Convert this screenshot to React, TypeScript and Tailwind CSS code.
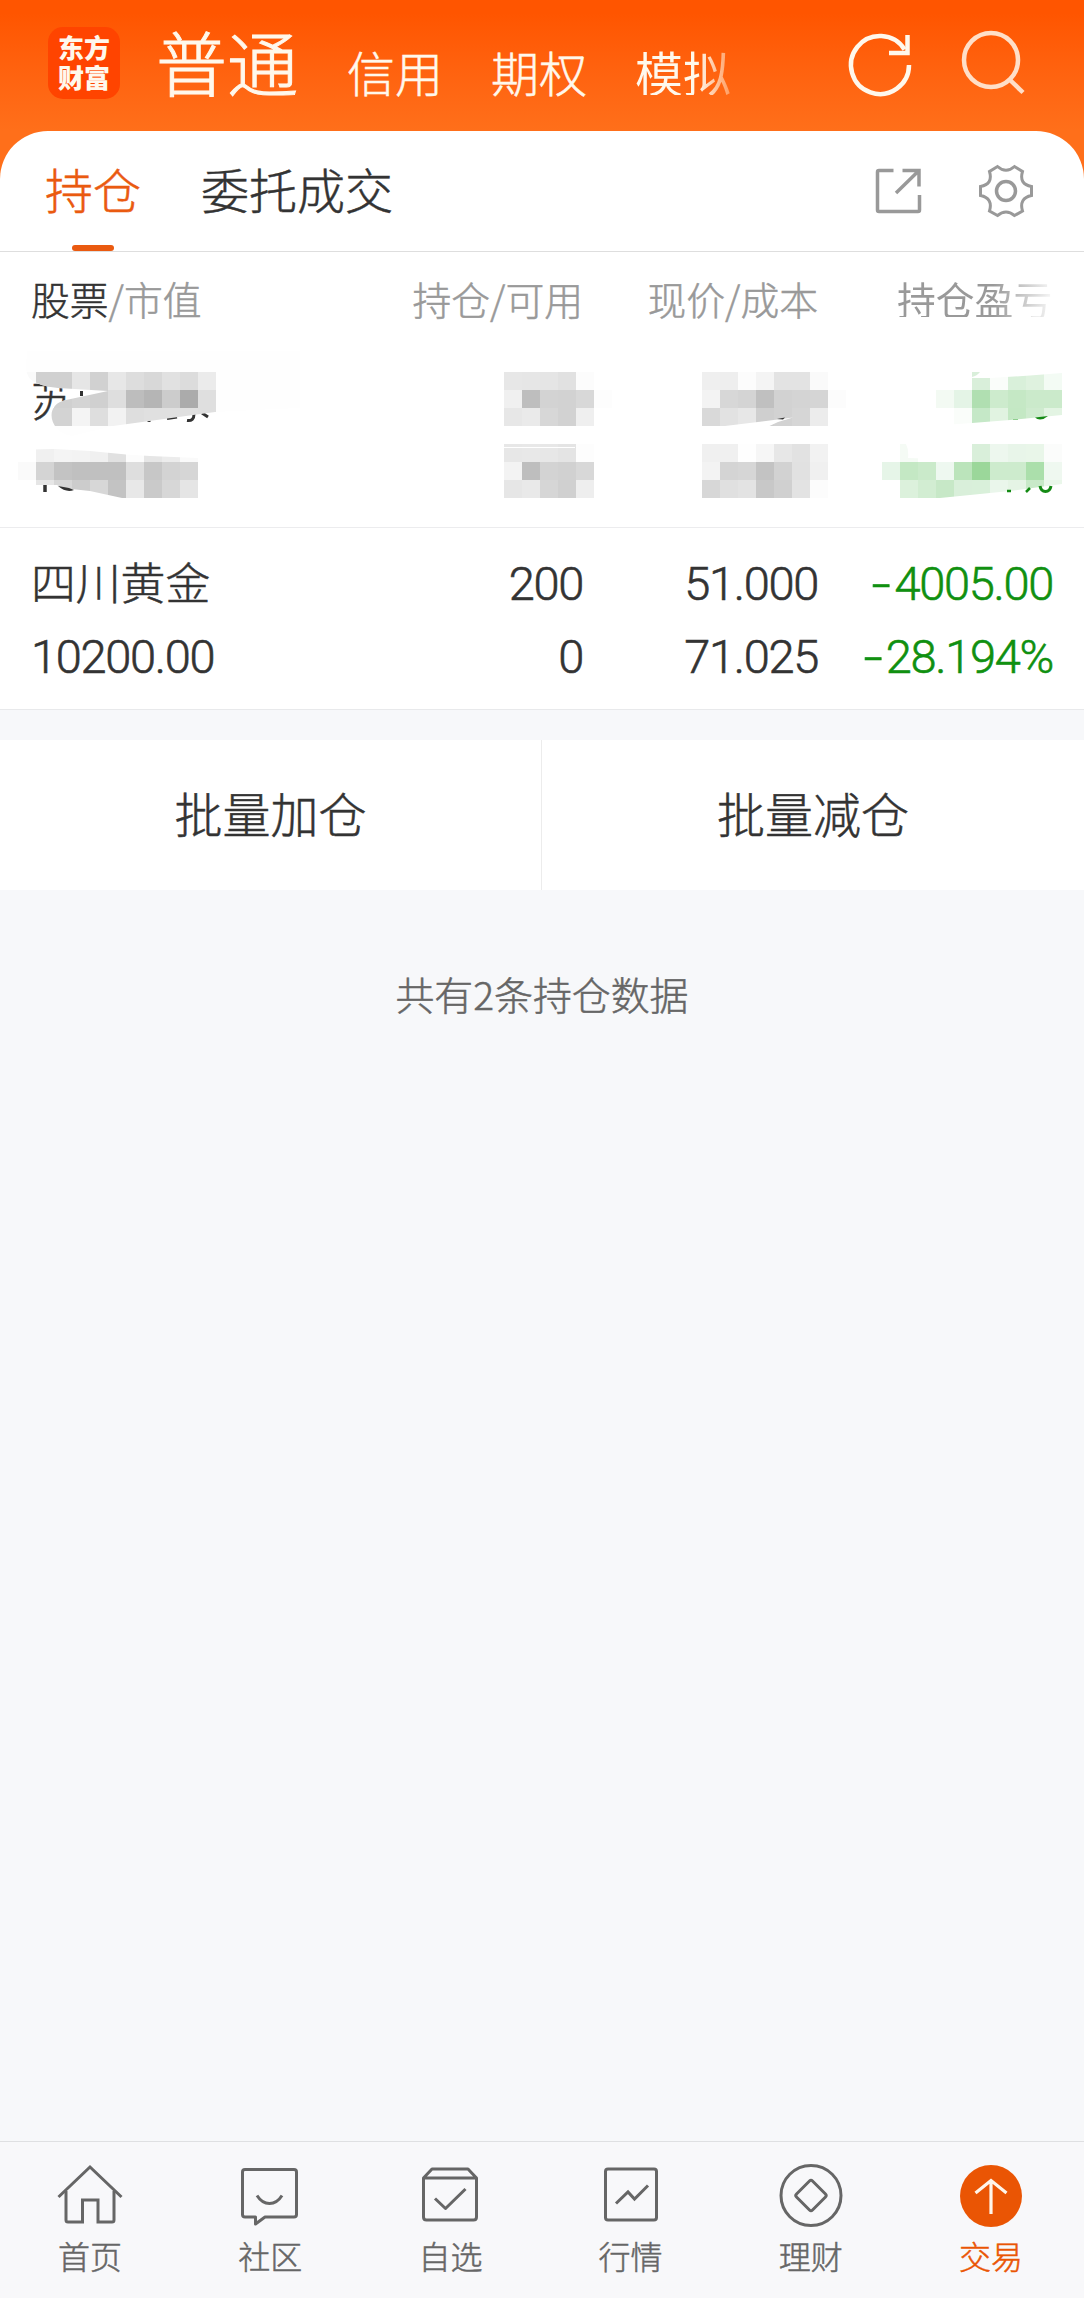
import React from "react";

type Cell = [number, number, string];

const greys = (x: number, y: number, values: number[]): Cell[] =>
  values.map((v, i) => [x + i * 18, y, `rgb(${v},${v},${v})`]);

const greens = (x: number, y: number, values: string[]): Cell[] =>
  values.map((v, i) => [x + i * 18, y, v]);

const nameCells: Cell[] = [
  ...greys(18, 372, [250, 208, 208, 230, 209, 231, 221, 216, 225, 220, 235]),
  ...greys(54, 390, [208, 212, 208, 222, 189, 181, 204, 171, 223]),
  ...greys(36, 408, [211, 211, 244, 222, 242, 222, 224, 224, 224, 223]),
];

const valueCells: Cell[] = [
  ...greys(36, 444, [240, 244, 243, 240, 225, 252, 230, 236, 250]),
  ...greys(18, 462, [250, 212, 195, 192, 192, 192, 222, 199, 211, 214]),
  ...greys(36, 480, [230, 215, 204, 215, 195, 232, 202, 215, 229]),
];

const middleCells: Cell[] = [
  ...greys(504, 372, [231, 230, 229, 225, 252]),
  ...greys(504, 390, [240, 190, 211, 210, 216, 253]),
  ...greys(504, 408, [231, 234, 215, 210, 239]),
  ...greys(504, 444, [231, 232, 231, 228, 253]),
  ...greys(504, 462, [243, 190, 211, 209, 216]),
  ...greys(504, 480, [230, 233, 214, 208, 238]),
  ...greys(702, 372, [239, 238, 252, 244, 227, 227, 250]),
  ...greys(702, 390, [243, 215, 212, 192, 210, 212, 213, 252]),
  ...greys(702, 408, [217, 226, 231, 207, 210, 214, 236]),
  ...greys(702, 444, [240, 240, 254, 246, 231, 226, 242]),
  ...greys(702, 462, [243, 212, 214, 195, 210, 225, 240]),
  ...greys(702, 480, [215, 224, 227, 200, 208, 227, 252]),
];

const profitCells: Cell[] = [
  ...greens(972, 372, ["#d9efda", "#fafdfa", "#d9f0da", "#dff2df", "#f3fbf4"]),
  ...greens(936, 390, ["#f3faf3", "#e4f4e6", "#b0dfb1", "#cdebcd", "#c5e8c5", "#cbeacb", "#cbeacb"]),
  ...greens(954, 408, ["#fafdfa", "#c5e8c7", "#e1f3e1", "#c4e8c4", "#cfebcf", "#e3f4e3"]),
];

const rateCells: Cell[] = [
  ...greens(900, 444, ["#f5fbf5", "#fff", "#fff", "#fff", "#d9efda", "#edf7ee", "#e8f5e9", "#e9f6e9", "#fbfcfb"]),
  ...greens(882, 462, ["#e6f5e8", "#c4e8c4", "#caeaca", "#eef8f0", "#bbe4bb", "#9bd79a", "#cdebcd", "#cdebcd", "#abdfab", "#eff8f0"]),
  ...greens(900, 480, ["#dcf1dc", "#d2edd2", "#c7e8c7", "#d9efda", "#d9f0da", "#eaf6eb", "#e5f4e5", "#c8e9c8", "#eaf7ea"]),
];

function Cells({ cells, clip }: { cells: Cell[]; clip?: string }) {
  return (
    <g clipPath={clip} shapeRendering="crispEdges">
      {cells.map(([x, y, fill]) => (
        <rect key={`${x}-${y}`} x={x} y={y} width="18" height="18" fill={fill} />
      ))}
    </g>
  );
}

const NAME_BRUSH =
  "M27 351 H300 V408 Q255 410 215 412 L113 426 L72 436 C48 432 44 404 66 400 L108 391 L58 388 Q38 386 30 379 Q26 374 26 366 Z";
const VALUE_BRUSH =
  "M12 450 L54 449 L90 451 L126 454.500 L150 456 L198 458 L240 455 V495 L197 498 H122 L90 491 L62 488 L57 485 H12 Z";

function RedactedRow() {
  return (
    <div className="relative h-[182px] shrink-0 border-b-[1px] border-[#ececee] bg-white">
      <div className="px-[31px] pt-[30px] text-[44.500px] leading-[44px] text-[#333]">苏</div>
      <svg className="absolute top-0 left-0" width="1084" height="181" viewBox="0 346 1084 181" fill="none">
        <defs>
          <clipPath id="nameBrush"><path d={NAME_BRUSH} /></clipPath>
          <clipPath id="valueBrush"><path d={VALUE_BRUSH} /></clipPath>
          <clipPath id="profitBrush">
            <path d="M930 366 H972 V372 H980 Q977 376 972 377 V378 H990 L1030 375.500 L1062 373 V415 L1010 420 L972 423 L930 426 Z" />
          </clipPath>
          <clipPath id="rateBrush">
            <path d="M880 444 H906 Q909 450 908 458 L972 460 Q967 452 968 444 H1062 V484 L1010 491 L940 498 H880 Z" />
          </clipPath>
        </defs>
        <path d={NAME_BRUSH} fill="#fefefe" />
        <path d="M81.500 391 V396" stroke="#333" strokeWidth="3" />
        <path d="M149 420 V422 M167 418.500 L177 417 M187 420.500 Q194 421.500 194 414 M202 413 L208 417" stroke="#333" strokeWidth="3" />
        <Cells cells={nameCells} clip="url(#nameBrush)" />
        <Cells cells={valueCells} clip="url(#valueBrush)" />
        <path d="M45 485 V492" stroke="#333" strokeWidth="3.500" />
        <path d="M58 486 Q66 493 74 490 L69 488 Z" fill="#333" />
        <Cells cells={middleCells} />
        <path d="M504 447.500 H575" stroke="#fff" />
        <path d="M725 426 L793 417.500 L778 422 L744 438 Z" fill="#fff" />
        <path d="M777 419 L785 417.500 L783 419.500 Z" fill="#333" />
        <Cells cells={profitCells} clip="url(#profitBrush)" />
        <Cells cells={rateCells} clip="url(#rateBrush)" />
        <path d="M1035 417.500 L1048 416 Q1044 419.500 1040 419.500 Q1037 419.500 1035 417.500 Z" fill="#148a14" />
        <path d="M1013 419.500 H1018" stroke="#8fcf8f" />
        <path d="M1007 491 H1011 M1026 492 L1030 488" stroke="#148a14" strokeWidth="2.500" />
        <path d="M1040 486 Q1041 491.500 1045.500 491.500 Q1050 491.500 1051 486" stroke="#148a14" strokeWidth="3" />
      </svg>
    </div>
  );
}

const num =
  "pt-[3px] font-['Roboto','Noto_Sans_CJK_SC',sans-serif] text-[47px] tracking-[-1.300px] [-webkit-text-stroke:0.600px]";

function Loss({ value }: { value: string }) {
  return (
    <div className={`pr-[31px] text-right text-[#109010] ${num}`}>
      <span className="mr-[5px] inline-block origin-right scale-x-[1.450]">-</span>
      {value}
    </div>
  );
}

function HomeIcon() {
  return (
    <svg width="72" height="72" viewBox="0 0 72 72" fill="none" stroke="#666" strokeWidth="3">
      <path d="M4.500 35 L36 5 L67.500 35" />
      <path d="M12 29 V58 Q12 60 14 60 H28.500 V38 H44 V60 H58 Q60 60 60 58 V29" />
    </svg>
  );
}

function CommunityIcon() {
  return (
    <svg width="72" height="72" viewBox="0 0 72 72" fill="none" stroke="#666" strokeWidth="3" strokeLinejoin="round">
      <path d="M11 7.500 H60 Q62.500 7.500 62.500 10 V52.500 Q62.500 55 60 55 H31 L21.500 62 V55 H11 Q8.500 55 8.500 52.500 V10 Q8.500 7.500 11 7.500 Z" />
      <path d="M23 33.500 Q28 41.500 35.500 41.500 Q43 41.500 48 33.500" />
    </svg>
  );
}

function WatchlistIcon() {
  return (
    <svg width="72" height="72" viewBox="0 0 72 72" fill="none" stroke="#666" strokeWidth="3" strokeLinejoin="round">
      <path d="M9.500 16 L18 7 H54 L62.500 16 V55 Q62.500 58 59.500 58 H12.500 Q9.500 58 9.500 55 Z M9.500 16 H62.500" />
      <path d="M21 36.500 L31.500 46.500 L51.500 27" />
    </svg>
  );
}

function MarketIcon() {
  return (
    <svg width="72" height="72" viewBox="0 0 72 72" fill="none" stroke="#666" strokeWidth="3">
      <rect x="10.500" y="7" width="51" height="51" rx="2.500" />
      <path d="M21 41.500 L33 30 L39.500 37 L53 23.500" />
    </svg>
  );
}

function WealthIcon() {
  return (
    <svg width="72" height="72" viewBox="0 0 72 72" fill="none" stroke="#666" strokeWidth="3">
      <circle cx="36" cy="33.500" r="30" />
      <path d="M34.500 19 Q36 17.500 37.500 19 L50.500 32 Q52 33.500 50.500 35 L37.500 48 Q36 49.500 34.500 48 L21.500 35 Q20 33.500 21.500 32 Z" />
    </svg>
  );
}

function TradeIcon() {
  return (
    <svg width="72" height="72" viewBox="0 0 72 72" fill="none">
      <circle cx="36" cy="34" r="31" fill="#ea5504" />
      <path d="M36 52 V19 M20.500 31 L36 18.500 L51.500 31" stroke="#fff5ea" strokeWidth="3.200" />
    </svg>
  );
}

const navItems = [
  { label: "首页", icon: <HomeIcon /> },
  { label: "社区", icon: <CommunityIcon /> },
  { label: "自选", icon: <WatchlistIcon /> },
  { label: "行情", icon: <MarketIcon /> },
  { label: "理财", icon: <WealthIcon /> },
  { label: "交易", icon: <TradeIcon />, active: true },
];

export default function App() {
  return (
    <div className="flex h-[2298px] w-[1084px] flex-col overflow-hidden bg-[#f7f8fa] font-['Noto_Sans_CJK_SC',sans-serif] font-light text-[#333] [-webkit-text-stroke:0.500px]">
      <header className="h-[131px] shrink-0 bg-linear-to-b from-[#ff5500] from-10% to-[#ff6f1a] text-[#fff8ec]">
        <div className="flex h-[131px] items-start">
          <div className="mt-[27px] ml-[48px] h-[72px] w-[72px] rounded-[15px] bg-[#ff4400] pt-[5px] text-center text-[26px] leading-[30px] font-black text-[#fff8ec] [-webkit-text-stroke:0px]">
            东方<br />财富
          </div>
          <div className="mt-[25px] ml-[36px] text-[71px] leading-[70px] [-webkit-text-stroke:1px]">普通</div>
          <div className="mt-[48px] ml-[49px] flex gap-[48px] text-[48px] leading-[47px]">
            <span>信用</span>
            <span>期权</span>
            <span className="bg-linear-to-r from-[#fff8ec] from-65% to-[#ff9a5c] bg-clip-text text-transparent [-webkit-text-stroke:0px] font-normal">模拟</span>
          </div>
          <svg className="mt-[25px] ml-auto mr-[52px]" width="190" height="80" viewBox="842 26 190 80" fill="none">
            <path d="M909 66 A29 29 0 1 1 904.500 50.500" stroke="#fff8ec" strokeWidth="4.500" />
            <path d="M889 54 H907.500 V36" stroke="#fff8ec" strokeWidth="4.500" />
            <circle cx="991" cy="61" r="27" stroke="#ffdfc8" strokeWidth="4.500" />
            <path d="M1009 80 L1023 93.500" stroke="#ffdfc8" strokeWidth="4.500" />
          </svg>
        </div>
      </header>

      <div className="shrink-0 bg-[#ff6f1a]">
        <div className="flex h-[121px] items-start rounded-t-[48px] border-b border-[#dedede] bg-white text-[48px] leading-[48px]">
          <div className="ml-[45px] flex h-[120px] w-[96px] flex-col items-center pt-[33px] text-[#ea5a10]">
            <span>持仓</span>
            <span className="mt-auto h-[6px] w-[42px] rounded-full bg-[#ea5a10]" />
          </div>
          <div className="ml-[60px] pt-[33px]">委托成交</div>
          <svg className="mt-[29px] mr-[46px] ml-auto" width="172" height="64" viewBox="866 160 172 64" fill="none" stroke="#999" strokeWidth="3.500">
            <path d="M893.500 170.500 H879 Q877.500 170.500 877.500 172 V210 Q877.500 211.500 879 211.500 H918 Q919.500 211.500 919.500 210 V195" />
            <path d="M902.500 170.500 H919 V186.500 M896 193 L918.500 171" />
            <path strokeWidth="3" d="M997.500 166.500 Q1006 174 1014.500 166.500 L1022.500 171.500 C1020 180 1023 185 1031.500 186.500 V195.500 C1023 197 1020 203 1022.500 211 L1014.500 215.500 Q1006 208.500 997.500 215.500 L989.500 211 C992 203 989 197 980.500 195.500 V186.500 C989 185 992 180 989.500 171.500 Z" />
            <circle cx="1006" cy="191" r="9.500" />
          </svg>
        </div>
      </div>

      <div className="grid h-[94px] shrink-0 grid-cols-[300px_283px_235px_1fr] items-start bg-white pt-[27px] text-[38.800px] leading-[38px] text-[#999]">
        <div className="pl-[31px]"><span className="text-[#333]">股票</span>/市值</div>
        <div className="text-right">持仓/可用</div>
        <div className="text-right">现价/成本</div>
        <div className="ml-[79px] w-[160px] whitespace-nowrap bg-linear-to-r from-[#999] from-60% to-[#fafafa] to-98% bg-clip-text font-normal text-transparent [-webkit-text-stroke:0px]">持仓盈亏</div>
      </div>

      <RedactedRow />

      <div className="grid h-[182px] shrink-0 grid-cols-[300px_283px_235px_1fr] grid-rows-[73px_73px] border-b border-[#e8e9eb] bg-white pt-[16px] leading-[73px]">
        <div className="pl-[31px] text-[44.800px]">四川黄金</div>
        <div className={`text-right ${num}`}>200</div>
        <div className={`text-right ${num}`}>51.000</div>
        <Loss value="4005.00" />
        <div className={`pl-[31px] ${num}`}>10200.00</div>
        <div className={`text-right ${num}`}>0</div>
        <div className={`text-right ${num}`}>71.025</div>
        <Loss value="28.194%" />
      </div>

      <div className="mt-[30px] grid h-[150px] shrink-0 grid-cols-2 bg-white text-[48px] leading-[144px]">
        <div className="border-r border-[#ececec] text-center">批量加仓</div>
        <div className="text-center">批量减仓</div>
      </div>

      <div className="mt-[84px] text-center text-[38.900px] leading-[38px] text-[#666]">共有2条持仓数据</div>

      <nav className="mt-auto grid h-[157px] shrink-0 grid-cols-6 border-t border-[#dfe0e2] bg-[#f8f8fa] pt-[20px] pr-[3px] text-[32px] leading-[32px] text-[#666]">
        {navItems.map((item) => (
          <div key={item.label} className={item.active ? "flex flex-col items-center text-[#ea5504]" : "flex flex-col items-center"}>
            {item.icon}
            <span className="mt-[5px]">{item.label}</span>
          </div>
        ))}
      </nav>
    </div>
  );
}
